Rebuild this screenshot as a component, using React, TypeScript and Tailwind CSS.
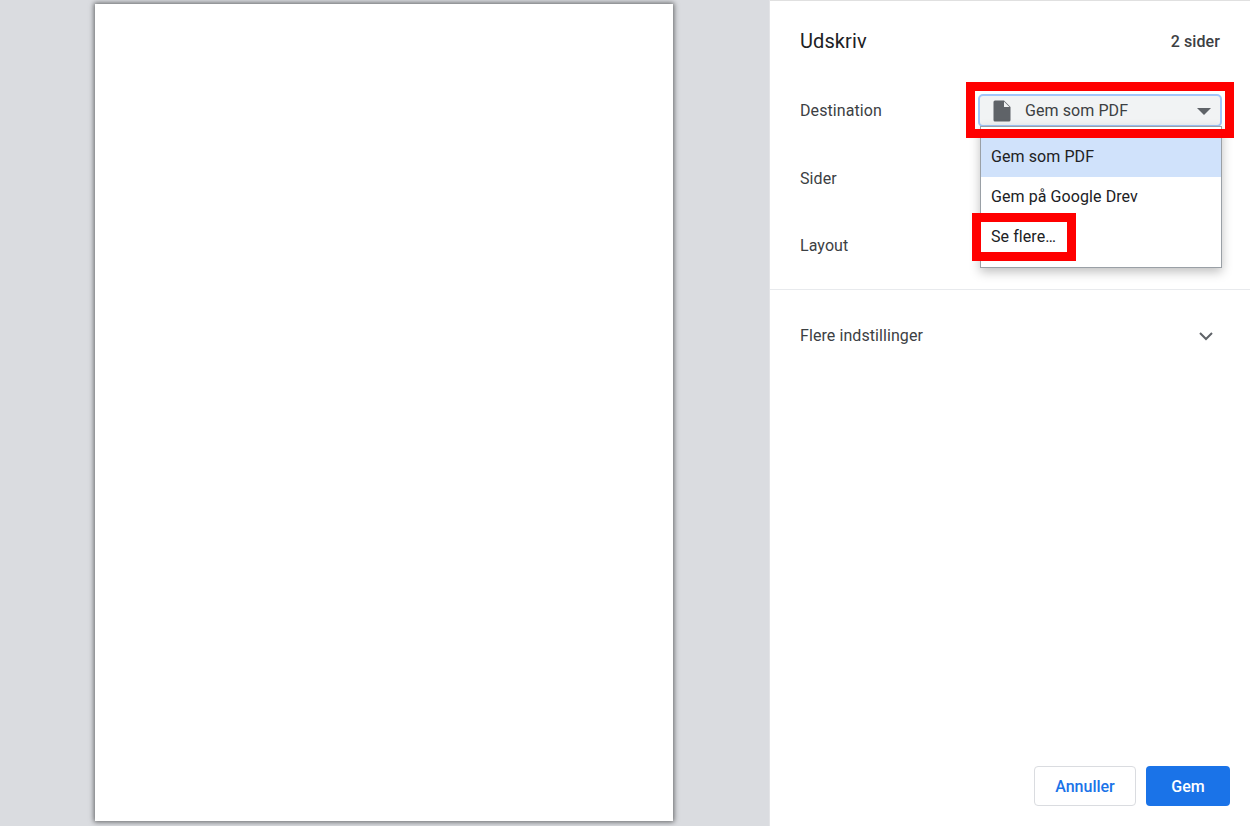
const font = { fontFamily: 'Roboto, "Liberation Sans", sans-serif' };

const FileIcon = () => (
  <svg width="18" height="22" viewBox="0 0 18 22" className="text-[#5f6368]" fill="currentColor">
    <path d="M2 0.5h9l6.5 6.5v13a1.5 1.5 0 0 1-1.5 1.5H2A1.5 1.5 0 0 1 .5 20V2A1.5 1.5 0 0 1 2 .5z" />
    <path d="M11 1.5V7h5.5z" fill="#f1f3f4" />
  </svg>
);

const Row = ({ label, className }: { label: string; className: string }) => (
  <p className={`text-[16px] leading-[20px] tracking-[0.08px] text-[#3c4043] ${className}`}>{label}</p>
);

export default function App() {
  return (
    <div className="flex w-[1250px] h-[826px] overflow-hidden bg-white" style={font}>
      <div className="w-[770px] h-full bg-[#dadce0] pl-[95px] pt-[4px] border-r border-[#e3e4e7]">
        <div className="w-[578px] h-[817px] bg-white shadow-[0_0_5px_1px_rgba(0,0,0,0.55)]" />
      </div>
      <div className="relative flex-1 flex flex-col border-t border-[#e0e0e0]">
        <div className="flex items-center justify-between pl-[30px] pr-[30px] h-[80px]">
          <h1 className="text-[20px] font-normal text-[#202124] tracking-[0.1px]">Udskriv</h1>
          <span className="pt-[2px] text-[16px] font-medium tracking-[0.1px] text-[#3c4043]">2 sider</span>
        </div>
        <div className="flex flex-col pl-[30px] pb-[34px] border-b border-[#e8eaed]">
          <Row label="Destination" className="mt-[20px]" />
          <Row label="Sider" className="mt-[48px]" />
          <Row label="Layout" className="mt-[47px] mb-[-1px]" />
        </div>
        <div className="flex items-center justify-between pl-[30px] pr-[37px] h-[92px]">
          <span className="text-[16px] tracking-[0.08px] text-[#3c4043]">Flere indstillinger</span>
          <svg width="14" height="9" viewBox="0 0 14 9" fill="none" stroke="#5f6368" strokeWidth="2">
            <path d="M1 1l6 6 6-6" />
          </svg>
        </div>
        <div className="mt-auto flex justify-end gap-[10px] pr-[20px] pb-[20px]">
          <button className="w-[102px] h-[40px] pt-[2px] rounded-[4px] border border-[#dadce0] bg-white text-[16px] font-medium text-[#1a73e8]">
            Annuller
          </button>
          <button className="w-[84px] h-[40px] pt-[2px] rounded-[4px] bg-[#1a73e8] text-[16px] font-medium text-white">
            Gem
          </button>
        </div>

        {/* dropdown sits over the Sider / Layout rows */}
        <div className="absolute left-[208px] top-[93px] w-[244px] h-[33px] flex items-center rounded-[5px] border-2 border-[#a1c6fa] bg-[#f1f3f4] pl-[13px] pr-[9px]">
          <FileIcon />
          <span className="ml-[14px] text-[16px] tracking-[0.08px] text-[#3c4043]">Gem som PDF</span>
          <svg className="ml-auto mt-[2px]" width="14" height="7" viewBox="0 0 14 7" fill="#5f6368">
            <path d="M0 0h14L7 7z" />
          </svg>
        </div>
        <div className="absolute left-[210px] top-[125px] w-[242px] h-[142px] pt-[11px] bg-white border border-[#9aa0a6] shadow-[0_4px_10px_rgba(0,0,0,0.25)] text-[16px] tracking-[0.08px] text-[#202124]">
          <div className="h-[39px] pb-[2px] flex items-center pl-[10px] bg-[#d0e2fb]">Gem som PDF</div>
          <div className="h-[40px] flex items-center pl-[10px]">Gem på Google Drev</div>
          <div className="h-[40px] flex items-center pl-[10px]">Se flere…</div>
        </div>

        {/* red annotation boxes */}
        <div className="absolute left-[196px] top-[81px] w-[268px] h-[56px] border-[9px] border-[#ff0000]" />
        <div className="absolute left-[202px] top-[212px] w-[104px] h-[48px] border-[9px] border-[#ff0000]" />
      </div>
    </div>
  );
}
